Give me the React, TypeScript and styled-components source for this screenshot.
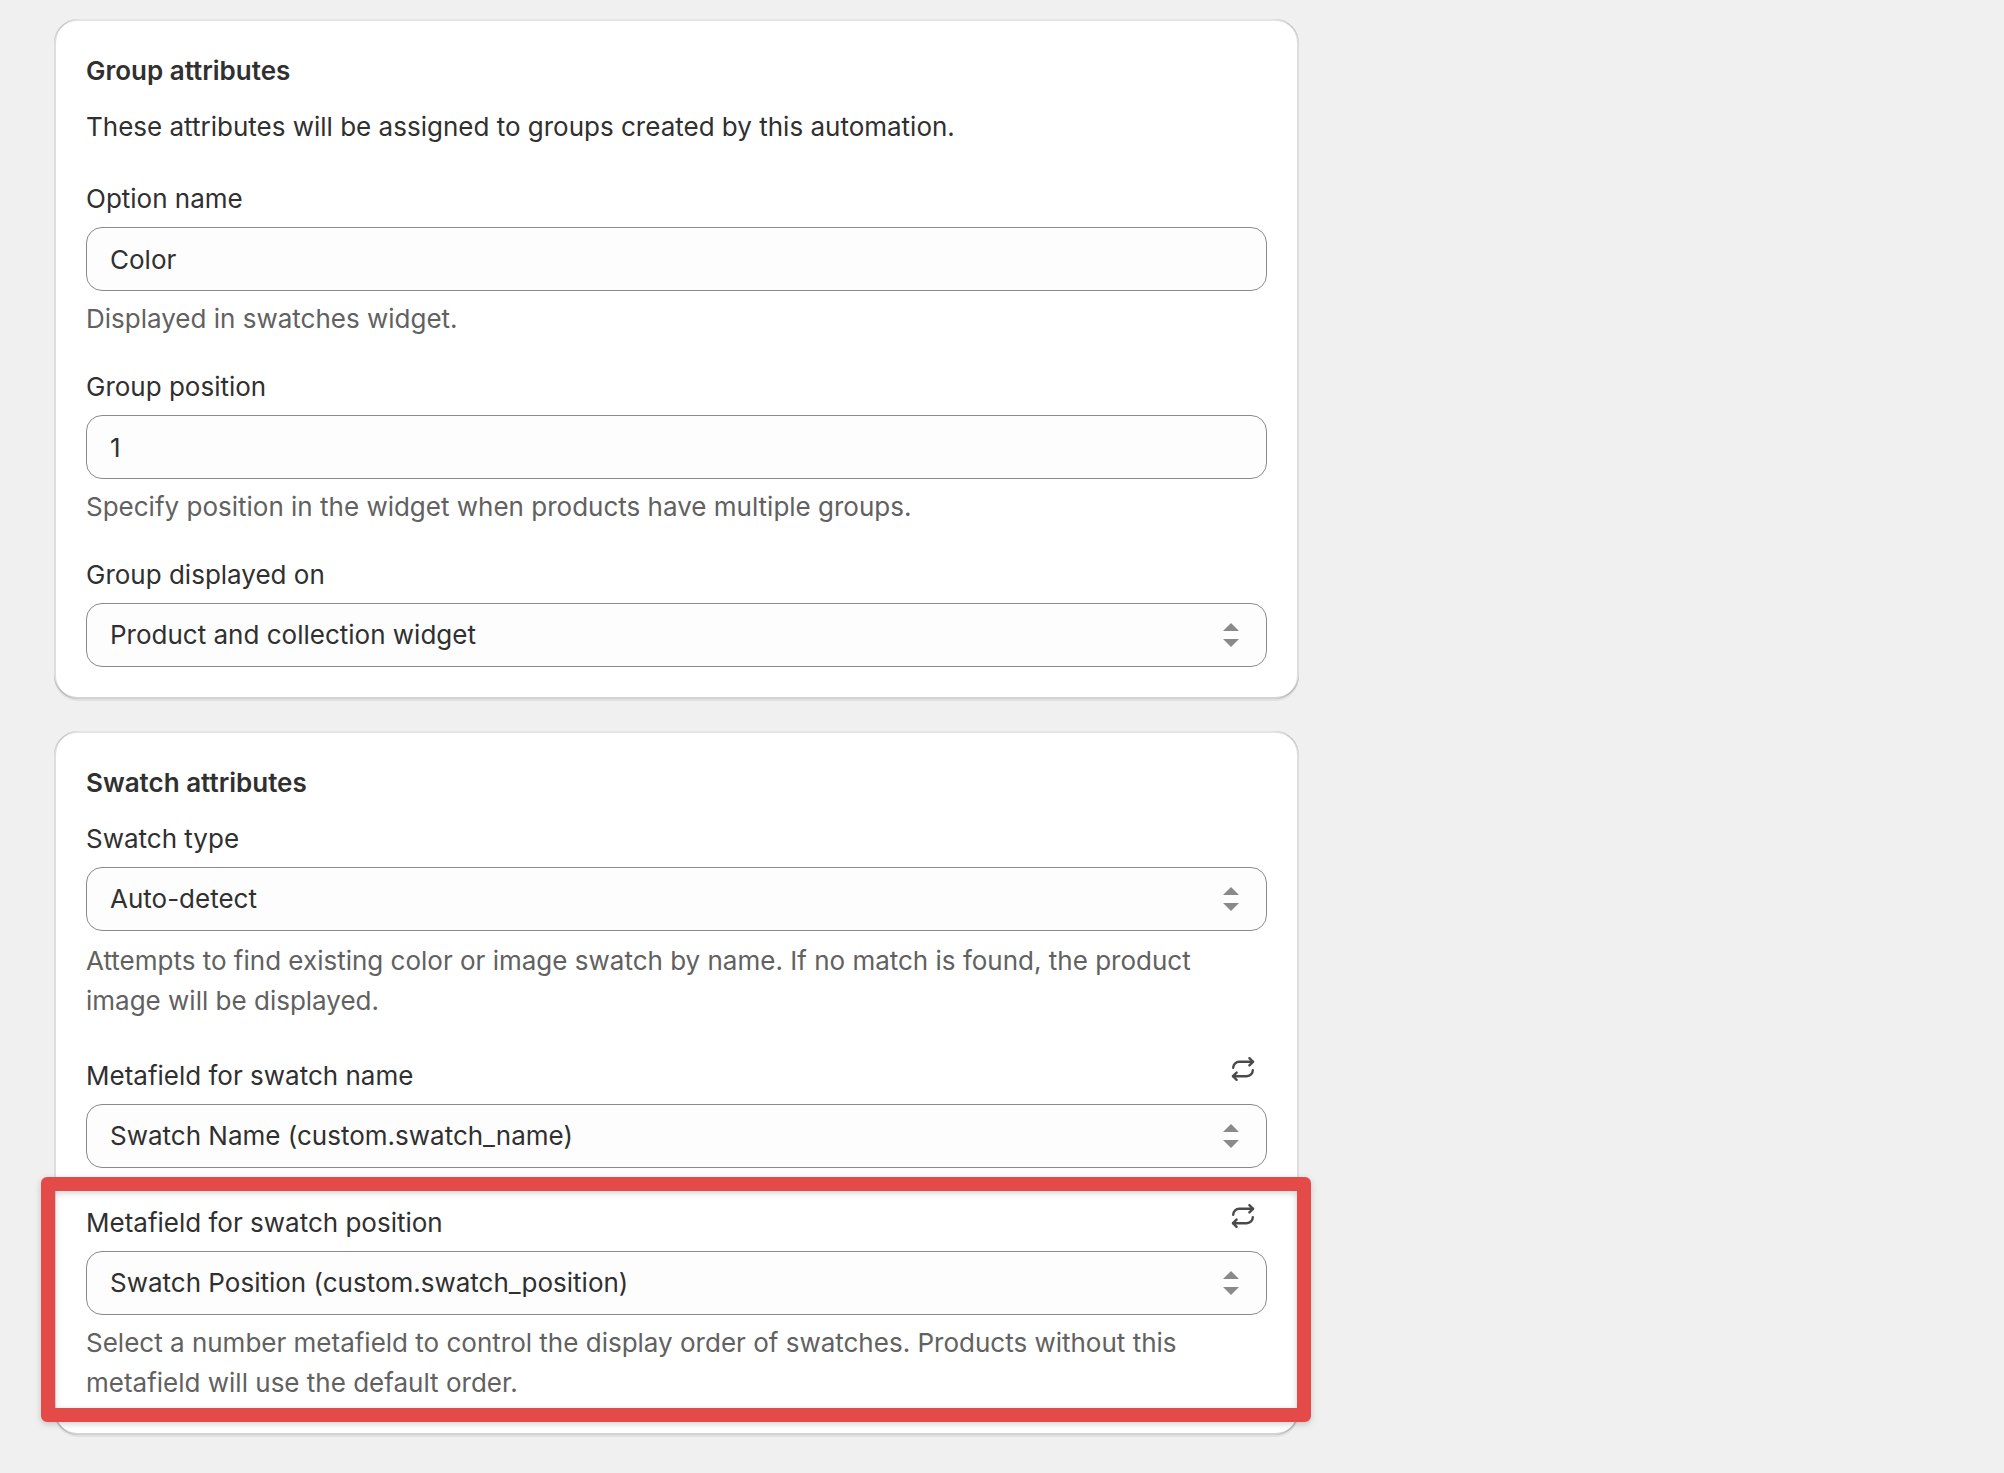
import React, { useId, useState } from "react";
import styled, { createGlobalStyle } from "styled-components";

const GlobalStyle = createGlobalStyle`
  *, *::before, *::after { box-sizing: border-box; }
  body {
    margin: 0;
    background: #f0f0f0;
    color: #303030;
    font-family: Inter, "Liberation Sans", sans-serif;
    font-size: 26px;
    font-weight: 425;
    line-height: 40px;
  }
`;

const Page = styled.main`
  display: grid;
  grid-template-columns: minmax(0, 2fr) minmax(0, 1fr);
  column-gap: 32px;
  min-height: 100vh;
  padding: 19px 50px 36px 54px;
`;

const Column = styled.div`
  display: flex;
  flex-direction: column;
  gap: 32px;
`;

const Card = styled.section`
  padding: 32px;
  border-radius: 24px;
  background: #fff;
  box-shadow:
    inset 2px 0 0 rgba(0, 0, 0, 0.13),
    inset -2px 0 0 rgba(0, 0, 0, 0.13),
    inset 0 -2px 0 rgba(0, 0, 0, 0.17),
    inset 0 2px 0 rgba(204, 204, 204, 0.5),
    0 2px 0 rgba(26, 26, 26, 0.07);
`;

const CardTitle = styled.h2`
  margin: 0 0 16px;
  font-size: 26px;
  font-weight: 625;
  line-height: 40px;
`;

const Intro = styled.p`
  margin: 0 0 32px;
`;

const Fields = styled.div`
  display: flex;
  flex-direction: column;
  gap: 28px;
`;

const FieldBox = styled.div<{ $highlighted?: boolean }>`
  position: relative;
  display: flex;
  flex-direction: column;
  gap: 8px;

  &::after {
    content: ${(p) => (p.$highlighted ? '""' : "none")};
    position: absolute;
    inset: -19px -44px -19px -45px;
    border: 14px solid #e44b48;
    border-radius: 6px;
    filter: drop-shadow(0 2px 3px rgba(0, 0, 0, 0.18));
    pointer-events: none;
  }
`;

const LabelRow = styled.div<{ $tall?: boolean }>`
  display: flex;
  align-items: flex-end;
  justify-content: space-between;
  height: ${(p) => (p.$tall ? "47px" : "40px")};
`;

const RefreshButton = styled.button`
  display: grid;
  place-items: center;
  align-self: flex-start;
  width: 48px;
  height: 40px;
  padding: 0;
  border: 0;
  background: none;
  color: #4a4a4a;
  cursor: pointer;
`;

const control = `
  width: 100%;
  height: 64px;
  margin: 0;
  border: 1px solid #8a8a8a;
  border-radius: 16px;
  background: #fdfdfd;
  color: inherit;
  font: inherit;
`;

const TextInput = styled.input`
  ${control}
  padding: 0 23px;
`;

const SelectWrap = styled.div`
  display: grid;
  align-items: center;

  > * {
    grid-area: 1 / 1;
  }

  > svg {
    justify-self: end;
    margin-right: 28px;
    pointer-events: none;
  }
`;

const Select = styled.select`
  ${control}
  padding: 0 64px 0 23px;
  appearance: none;
`;

const Help = styled.p<{ $spaced?: boolean }>`
  margin: ${(p) => (p.$spaced ? "2px 0 0" : "0")};
  color: #616161;
`;

const SortIcon = () => (
  <svg width="16" height="24" viewBox="0 0 16 24" fill="#8a8a8a" aria-hidden="true">
    <path d="M8 0 16 8H0Z" />
    <path d="M0 16H16L8 24Z" />
  </svg>
);

const RefreshIcon = () => (
  <svg
    width="24"
    height="26"
    viewBox="0 0 24 26"
    fill="none"
    stroke="currentColor"
    strokeWidth="2.4"
    strokeLinecap="round"
    strokeLinejoin="round"
    aria-hidden="true"
  >
    <path d="M2.2 11.8A6 6 0 0 1 8.2 5.8H22" />
    <path d="M18.4 2.2 22 5.8 18.4 9.4" />
    <path d="M21.8 14.2A6 6 0 0 1 15.8 20.2H2" />
    <path d="M5.6 16.6 2 20.2 5.6 23.8" />
  </svg>
);

interface FieldProps {
  label: string;
  value: string;
  help?: string;
  kind?: "text" | "select";
  refreshable?: boolean;
  highlighted?: boolean;
  spacedHelp?: boolean;
}

function Field({ label, value, help, kind = "select", refreshable, highlighted, spacedHelp }: FieldProps) {
  const id = useId();
  const [current, setCurrent] = useState(value);
  const helpId = help ? `${id}-help` : undefined;

  return (
    <FieldBox $highlighted={highlighted}>
      <LabelRow $tall={refreshable}>
        <label htmlFor={id}>{label}</label>
        {refreshable && (
          <RefreshButton type="button" aria-label={`Reload ${label.toLowerCase()}`}>
            <RefreshIcon />
          </RefreshButton>
        )}
      </LabelRow>
      {kind === "text" ? (
        <TextInput id={id} value={current} aria-describedby={helpId} onChange={(e) => setCurrent(e.target.value)} />
      ) : (
        <SelectWrap>
          <Select id={id} value={current} aria-describedby={helpId} onChange={(e) => setCurrent(e.target.value)}>
            <option value={value}>{value}</option>
          </Select>
          <SortIcon />
        </SelectWrap>
      )}
      {help && (
        <Help id={helpId} $spaced={spacedHelp}>
          {help}
        </Help>
      )}
    </FieldBox>
  );
}

export default function App() {
  return (
    <>
      <GlobalStyle />
      <Page>
        <Column>
          <Card>
            <CardTitle>Group attributes</CardTitle>
            <Intro>These attributes will be assigned to groups created by this automation.</Intro>
            <Fields>
              <Field kind="text" label="Option name" value="Color" help="Displayed in swatches widget." />
              <Field
                kind="text"
                label="Group position"
                value="1"
                help="Specify position in the widget when products have multiple groups."
              />
              <Field label="Group displayed on" value="Product and collection widget" />
            </Fields>
          </Card>
          <Card>
            <CardTitle>Swatch attributes</CardTitle>
            <Fields>
              <Field
                label="Swatch type"
                value="Auto-detect"
                help="Attempts to find existing color or image swatch by name. If no match is found, the product image will be displayed."
                spacedHelp
              />
              <Field label="Metafield for swatch name" value="Swatch Name (custom.swatch_name)" refreshable />
              <Field
                label="Metafield for swatch position"
                value="Swatch Position (custom.swatch_position)"
                help="Select a number metafield to control the display order of swatches. Products without this metafield will use the default order."
                refreshable
                highlighted
              />
            </Fields>
          </Card>
        </Column>
      </Page>
    </>
  );
}
